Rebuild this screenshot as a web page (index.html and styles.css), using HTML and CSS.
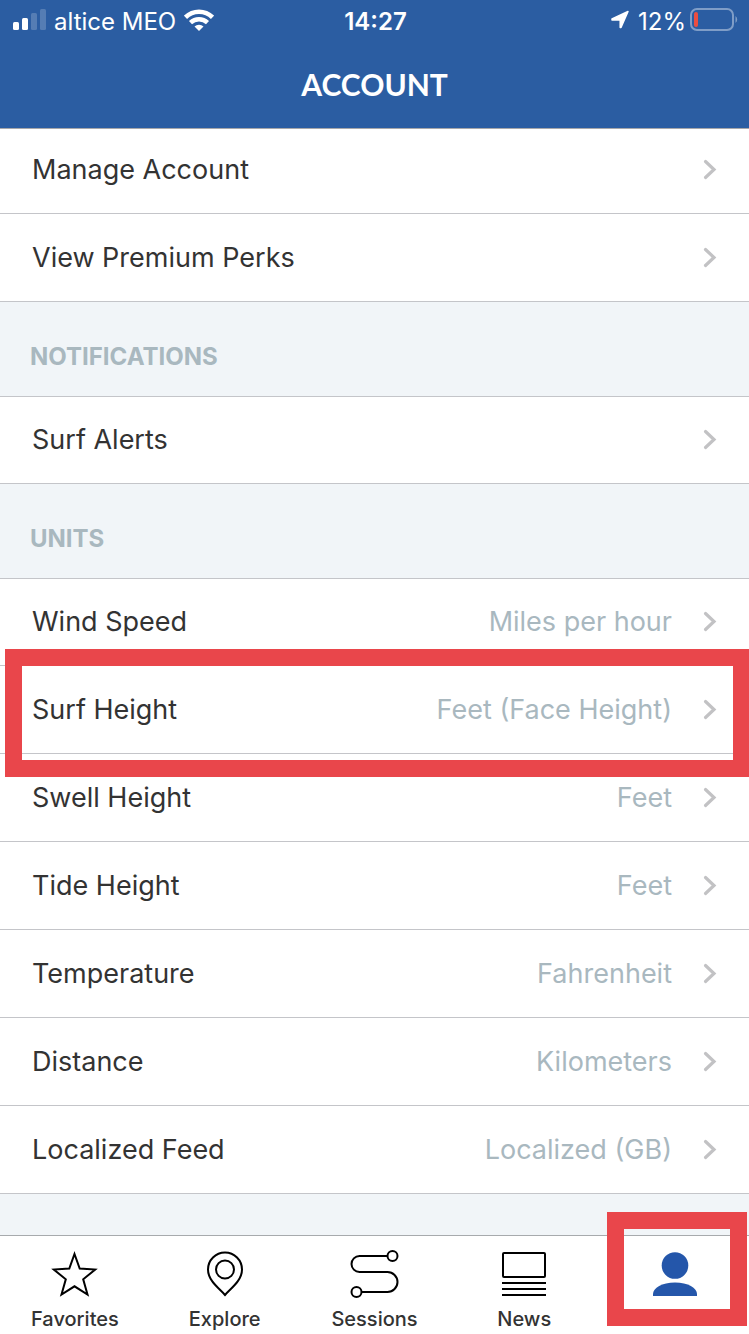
FILE: index.html
```html
<!DOCTYPE html>
<html lang="en">
<head>
    <meta charset="UTF-8">
    <meta name="viewport" content="width=device-width, initial-scale=1.0">
    <title>Account</title>
    <link rel="stylesheet" href="styles.css">
</head>
<body>

    <!-- Shared icons -->
    <svg class="sprite" aria-hidden="true">
        <symbol id="chevron" viewBox="0 0 14 22">
            <path d="M2.500 2.500l8.500 8-8.500 8" fill="none" stroke="#c2c2c4" stroke-width="3.200" stroke-linecap="round" stroke-linejoin="miter"/>
        </symbol>
    </svg>

    <header class="header">
        <div class="status-bar">
            <div class="status-left">
                <svg width="33" height="22" viewBox="0 0 33 22" fill="#fff">
                    <rect x="0" y="13" width="6" height="8" rx="1.5"/>
                    <rect x="9" y="9" width="6" height="12" rx="1.5"/>
                    <rect x="18" y="4" width="6" height="17" rx="1.5" opacity="0.2"/>
                    <rect x="27" y="0" width="6" height="21" rx="1.5" opacity="0.2"/>
                </svg>
                <span class="carrier">altice MEO</span>
                <svg width="30" height="22" viewBox="0 0 30 22">
                    <g fill="none" stroke="#fff" stroke-width="4.500">
                        <path d="M1.500 8.300a19.500 19.500 0 0 1 27 0"/>
                        <path d="M6.500 13.700a12.500 12.500 0 0 1 17 0"/>
                    </g>
                    <path d="M15 22l-4.500-4.500a6.500 6.500 0 0 1 9 0z" fill="#fff"/>
                </svg>
            </div>
            <span class="time">14:27</span>
            <div class="status-right">
                <svg width="20" height="20" viewBox="0 0 20 20" fill="#fff" stroke="#fff" stroke-width="1.500" stroke-linejoin="round">
                    <path d="M18 1.500L11 17.500L10.200 17.500V10H2V9z"/>
                </svg>
                <span class="percent">12%</span>
                <svg width="48" height="24" viewBox="0 0 48 24">
                    <rect x="1" y="1" width="42" height="21" rx="6" fill="none" stroke="#fff" stroke-opacity="0.4" stroke-width="2"/>
                    <rect x="4" y="4" width="4" height="15" rx="2" fill="#ec4d40"/>
                    <path d="M45.500 8a4.500 4.500 0 0 1 0 7z" fill="#fff" fill-opacity="0.4"/>
                </svg>
            </div>
        </div>
        <h1>ACCOUNT</h1>
    </header>

    <main>
        <ul class="list list-top">
            <li><button class="row">Manage Account<svg class="chevron"><use href="#chevron"/></svg></button></li>
            <li><button class="row">View Premium Perks<svg class="chevron"><use href="#chevron"/></svg></button></li>
        </ul>

        <h2>NOTIFICATIONS</h2>
        <ul class="list">
            <li><button class="row">Surf Alerts<svg class="chevron"><use href="#chevron"/></svg></button></li>
        </ul>

        <h2>UNITS</h2>
        <ul class="list">
            <li><button class="row">Wind Speed<span class="value">Miles per hour</span><svg class="chevron"><use href="#chevron"/></svg></button></li>
            <li class="marked"><button class="row">Surf Height<span class="value">Feet (Face Height)</span><svg class="chevron"><use href="#chevron"/></svg></button></li>
            <li><button class="row">Swell Height<span class="value">Feet</span><svg class="chevron"><use href="#chevron"/></svg></button></li>
            <li><button class="row">Tide Height<span class="value">Feet</span><svg class="chevron"><use href="#chevron"/></svg></button></li>
            <li><button class="row">Temperature<span class="value">Fahrenheit</span><svg class="chevron"><use href="#chevron"/></svg></button></li>
            <li><button class="row">Distance<span class="value">Kilometers</span><svg class="chevron"><use href="#chevron"/></svg></button></li>
            <li><button class="row">Localized Feed<span class="value">Localized (GB)</span><svg class="chevron"><use href="#chevron"/></svg></button></li>
        </ul>
    </main>

    <!-- Bottom tabs -->
    <nav class="tabs">
        <a class="tab" href="#favorites">
            <svg width="48" height="50" viewBox="0 0 48 50" fill="none" stroke="#000" stroke-width="2">
                <path d="M23.500 5l5.200 14.600 15.500.900-12 9.800 4.300 15.200-13-8.200-13 8.200 4.300-15.200-12-9.800 15.500-.900z"/>
            </svg>
            Favorites
        </a>
        <a class="tab" href="#explore">
            <svg width="48" height="50" viewBox="0 0 48 50" fill="none" stroke="#000" stroke-width="2">
                <path d="M24 46C19 40 7 32 7 20.500a17 17 0 0 1 34 0C41 32 29 40 24 46z"/>
                <circle cx="24" cy="20.500" r="9"/>
            </svg>
            Explore
        </a>
        <a class="tab" href="#sessions">
            <svg width="48" height="50" viewBox="0 0 48 50" fill="none" stroke="#000" stroke-width="2">
                <circle cx="42.500" cy="7" r="5"/>
                <circle cx="6.500" cy="43" r="5"/>
                <path d="M37.500 7H9.500a8 8 0 0 0 0 16h28a10 10 0 0 1 0 20h-26"/>
            </svg>
            Sessions
        </a>
        <a class="tab" href="#news">
            <svg width="48" height="50" viewBox="0 0 48 50" fill="none" stroke="#000" stroke-width="2">
                <rect x="3" y="4" width="42" height="24" rx="1"/>
                <path d="M2 34h44M2 40h44M2 46h44"/>
            </svg>
            News
        </a>
        <a class="tab marked" href="#account" aria-label="Account">
            <svg width="48" height="50" viewBox="0 0 48 50" fill="#2456aa">
                <circle cx="25" cy="16.500" r="13.300"/>
                <path d="M3 47v-2C3 39 12 33.500 25 33.500S47 39 47 45v2z"/>
            </svg>
        </a>
    </nav>

</body>
</html>
```

FILE: styles.css
```css
* {
    box-sizing: border-box;
}

body {
    display: flex;
    flex-direction: column;
    min-height: 100vh;
    margin: 0;
    background-color: #f1f5f8;
    color: #333;
    font-family: Inter, "Liberation Sans", sans-serif;
    overflow-x: hidden;
}

.sprite {
    display: none;
}

/* Header */
.header {
    position: sticky;
    top: 0;
    z-index: 2;
    background-color: #2b5da2;
    border-bottom: 1px solid #a7a7aa;
    color: #fff;
}

.status-bar {
    display: grid;
    grid-template-columns: 1fr auto 1fr;
    align-items: center;
    height: 42px;
    padding: 0 11px 0 13px;
    font-size: 24px;
}

.status-bar svg {
    margin-bottom: 2px;
}

.status-left,
.status-right {
    display: flex;
    align-items: center;
    gap: 8px;
}

.status-right {
    justify-content: flex-end;
}

.percent {
    margin-right: -4px;
}

.time {
    font-weight: 600;
}

h1 {
    margin: 0;
    padding: 24px 0 26px;
    font-family: Lato, sans-serif;
    font-size: 30px;
    font-weight: 700;
    line-height: 36px;
    text-align: center;
}

/* Settings lists */
h2 {
    margin: 0;
    padding: 39px 30px 23px;
    border-bottom: 1px solid #c4c5c9;
    color: #a9b8bf;
    font-size: 24px;
    font-weight: 700;
    line-height: 32px;
}

.list {
    margin: 0;
    padding: 0;
    background-color: #fff;
    list-style: none;
}

.row {
    display: flex;
    align-items: center;
    width: 100%;
    height: 88px;
    padding: 0 32px;
    background: none;
    border: none;
    border-bottom: 1px solid #c4c5c9;
    color: #333;
    font-family: inherit;
    font-size: 27px;
    text-align: left;
    cursor: pointer;
}

h2 + .list li:first-child .row {
    height: 87px;
    padding-bottom: 1px;
}

/* first rows sit slightly under the header */
.list-top {
    margin-top: -3px;
}

.value {
    margin-left: auto;
    color: #a9b8bf;
}

.chevron {
    flex: none;
    width: 14px;
    height: 22px;
    margin-left: auto;
}

.value + .chevron {
    margin-left: 31px;
}

/* Tab bar */
.tabs {
    display: flex;
    position: sticky;
    bottom: 0;
    height: 99px;
    margin-top: auto;
    background-color: #fff;
    border-top: 1px solid #a7aaad;
}

.tab {
    display: flex;
    flex: 1;
    flex-direction: column;
    align-items: center;
    gap: 8px;
    padding-top: 13px;
    color: #333;
    font-size: 20px;
    font-weight: 500;
    line-height: 24px;
    text-decoration: none;
}

.tab svg {
    overflow: visible;
}

/* Red frames */
.marked {
    position: relative;
}

.marked::after {
    content: "";
    position: absolute;
    z-index: 1;
    border: 17px solid #e9464b;
    pointer-events: none;
}

.list .marked::after {
    top: -17px;
    right: -1px;
    bottom: -23px;
    left: 5px;
}

.tab.marked::after {
    top: -24px;
    right: 2px;
    bottom: 8px;
    left: 8px;
}
```
